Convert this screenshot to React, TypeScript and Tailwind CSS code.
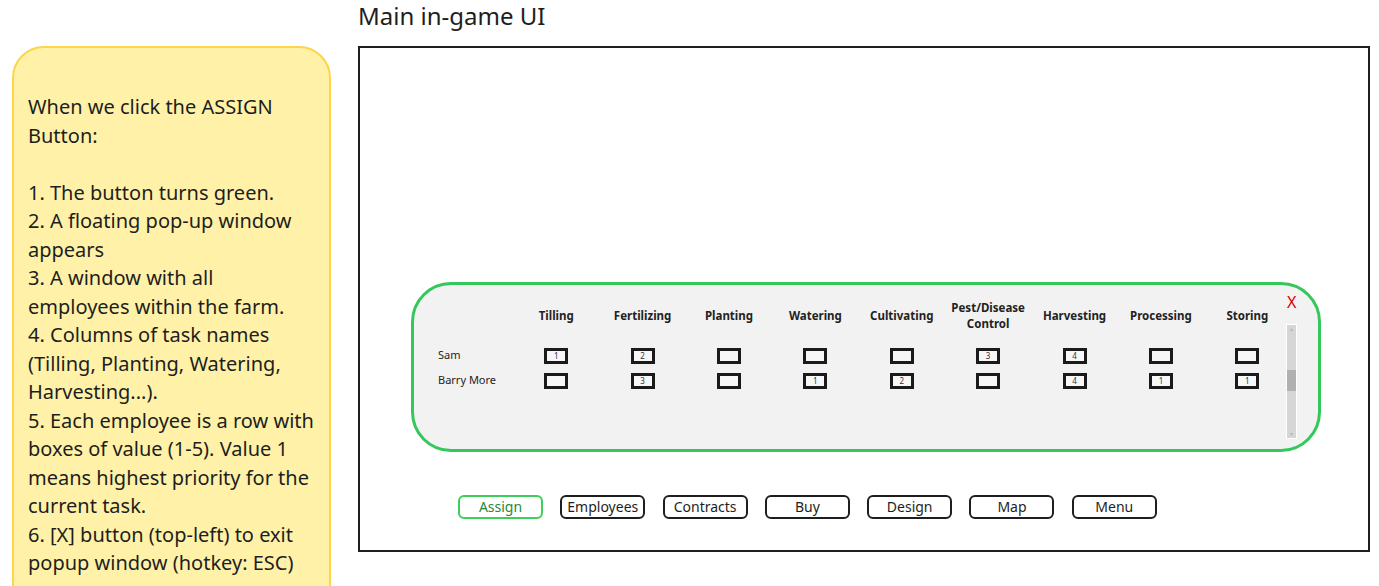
import React from "react";

const tasks = [
  "Tilling",
  "Fertilizing",
  "Planting",
  "Watering",
  "Cultivating",
  "Pest/Disease Control",
  "Harvesting",
  "Processing",
  "Storing",
];

const rows: { name: string; vals: (number | null)[] }[] = [
  { name: "Sam", vals: [1, 2, null, null, null, 3, 4, null, null] },
  { name: "Barry More", vals: [null, 3, null, 1, 2, null, 4, 1, 1] },
];

const buttons = ["Assign", "Employees", "Contracts", "Buy", "Design", "Map", "Menu"];

function Box({ v }: { v: number | null }) {
  return (
    <div className="w-[24px] h-[16px] border-[3px] border-[#1a1a1a] bg-[#f7f7f7] flex items-center justify-center text-[8px] leading-none text-[#333]">
      {v ?? ""}
    </div>
  );
}

export default function App() {
  const font = { fontFamily: '"Noto Sans", "Open Sans", sans-serif' };
  return (
    <div
      className="w-[1379px] h-[586px] overflow-hidden bg-white flex text-[#222]"
      style={font}
    >
      {/* note */}
      <div className="pl-[12px] pt-[46px] w-[358px] shrink-0">
        <div className="w-[319px] h-[600px] rounded-[32px] border-2 border-[#fcd54a] bg-[#fff2a8] pl-[14px] pr-[13px] pt-[45px] text-[20px] leading-[28.5px] text-[#1e1e1e]">
          <p>When we click the ASSIGN Button:</p>
          <p>&nbsp;</p>
          <p>1. The button turns green.</p>
          <p>2. A floating pop-up window appears</p>
          <p>3. A window with all employees within the farm.</p>
          <p>4. Columns of task names (Tilling, Planting, Watering, Harvesting...).</p>
          <p>5. Each employee is a row with boxes of value (1-5). Value 1 means highest priority for the current task.</p>
          <p>6. [X] button (top-left) to exit popup window (hotkey: ESC)</p>
        </div>
      </div>

      {/* right */}
      <div className="flex flex-col">
        <div className="h-[46px] text-[24px] leading-[32px] text-[#1e1e1e]">Main in-game UI</div>
        <div className="w-[1012px] h-[506px] border-2 border-[#1e1e1e] flex flex-col pl-[51px] pt-[234px]">
          {/* popup */}
          <div className="relative w-[910px] h-[170px] rounded-[40px] border-[3px] border-[#34c759] bg-[#f2f2f2] pl-[24px] pt-[15px]">
            <div className="grid grid-cols-[75px_repeat(9,86.4px)]">
              <div className="h-[32px]" />
              {tasks.map((t) => (
                <div
                  key={t}
                  className="h-[32px] flex items-center justify-center text-center font-bold text-[11.5px] leading-[16px] px-[4px]"
                >
                  {t}
                </div>
              ))}
            </div>
            <div className="mt-[11px] flex flex-col">
              {rows.map((r) => (
                <div key={r.name} className="grid grid-cols-[75px_repeat(9,86.4px)] h-[25px] items-center">
                  <div className="text-[11px] text-[#222]">{r.name}</div>
                  {r.vals.map((v, i) => (
                    <div key={i} className="flex justify-center">
                      <Box v={v} />
                    </div>
                  ))}
                </div>
              ))}
            </div>
            {/* close X */}
            <div className="absolute left-[873px] top-[7px] text-[#d40000] text-[16px] leading-[20px]">X</div>
            {/* scrollbar */}
            <div className="absolute left-[872px] top-[39px] w-[11px] h-[115px] border border-white bg-[#d6d6d6] flex flex-col items-center">
              <div className="text-[5px] leading-[8px] text-[#b5b5b5]">▲</div>
              <div className="mt-[37px] w-[9px] h-[21px] bg-[#b0b0b0]" />
              <div className="mt-auto text-[5px] leading-[8px] text-[#b5b5b5]">▼</div>
            </div>
          </div>

          {/* buttons */}
          <div className="mt-[43px] ml-[47px] flex gap-[17.3px]">
            {buttons.map((b, i) => (
              <div
                key={b}
                className={
                  i === 0
                    ? "w-[85px] h-[24px] rounded-[6px] border-2 border-[#3ccf5c] bg-white text-[#1f8a3a] text-[14px] leading-[20px] flex items-center justify-center"
                    : "w-[85px] h-[24px] rounded-[6px] border-2 border-[#1e1e1e] bg-white text-[#1e1e1e] text-[14px] leading-[20px] flex items-center justify-center whitespace-nowrap"
                }
              >
                {b}
              </div>
            ))}
          </div>
        </div>
      </div>
    </div>
  );
}
